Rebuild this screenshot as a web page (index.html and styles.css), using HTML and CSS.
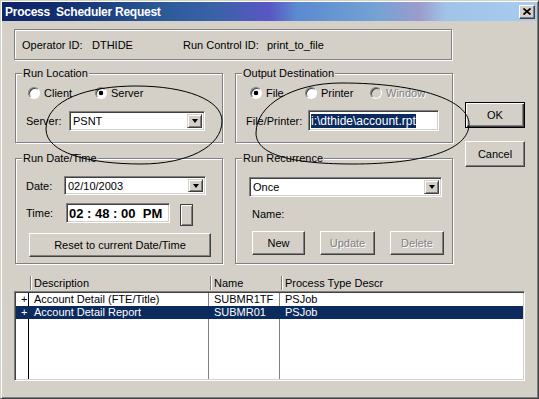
FILE: index.html
```html
<!DOCTYPE html>
<html lang="en">

<head>
  <meta charset="UTF-8">
  <meta name="viewport" content="width=device-width, initial-scale=1.0">
  <title>Process Scheduler Request</title>
  <link rel="stylesheet" href="styles.css">
</head>

<body>
  <div class="window">
    <div class="titlebar">
      <span class="title">Process  Scheduler Request</span>
      <button class="close-btn">
        <svg width="8" height="7" viewBox="0 0 8 7">
          <path d="M0.5 0.5L7.5 6.5M7.5 0.5L0.5 6.5" stroke="#000" stroke-width="1.7" fill="none" />
        </svg>
      </button>
    </div>

    <div class="dialog">
      <div class="info-box etched">
        <span class="info-op">Operator ID:</span>
        <span class="info-user">DTHIDE</span>
        <span class="info-rc">Run Control ID:</span>
        <span>print_to_file</span>
      </div>

      <div class="panels">
        <div class="group etched">
          <div class="group-title">Run Location</div>
          <div class="radio-row loc-radios">
            <label class="radio w-client"><span class="radio-dot"></span>Client</label>
            <label class="radio"><span class="radio-dot checked"></span>Server</label>
          </div>
          <div class="field-row loc-field">
            <span class="lbl w-server">Server:</span>
            <div class="combo combo-server"><span class="combo-text">PSNT</span><span class="drop"></span></div>
          </div>
        </div>

        <div class="group etched">
          <div class="group-title">Output Destination</div>
          <div class="radio-row out-radios">
            <label class="radio w-file"><span class="radio-dot checked"></span>File</label>
            <label class="radio w-printer"><span class="radio-dot"></span>Printer</label>
            <label class="radio disabled"><span class="radio-dot"></span>Window</label>
          </div>
          <div class="field-row out-field">
            <span class="lbl w-fileprinter">File/Printer:</span>
            <div class="textbox"><span class="selected">i:\dthide\account.rpt</span></div>
          </div>
        </div>

        <div class="side-buttons">
          <button class="btn btn-default">OK</button>
          <button class="btn btn-cancel">Cancel</button>
        </div>

        <div class="group etched">
          <div class="group-title">Run Date/Time</div>
          <div class="field-row date-row">
            <span class="lbl w-date">Date:</span>
            <div class="combo combo-date"><span class="combo-text">02/10/2003</span><span class="drop"></span></div>
          </div>
          <div class="field-row time-row">
            <span class="lbl w-time">Time:</span>
            <div class="time-field">02 : 48 : 00  PM</div>
            <div class="spinner"></div>
          </div>
          <button class="btn btn-reset">Reset to current Date/Time</button>
        </div>

        <div class="group etched">
          <div class="group-title">Run Recurrence</div>
          <div class="combo combo-once"><span class="combo-text">Once</span><span class="drop"></span></div>
          <div class="lbl name-lbl">Name:</div>
          <div class="rec-buttons">
            <button class="btn btn-new">New</button>
            <button class="btn btn-update disabled">Update</button>
            <button class="btn btn-delete disabled">Delete</button>
          </div>
        </div>
      </div>

      <div class="list-head">
        <span></span>
        <span class="head-cell">Description</span>
        <span class="head-cell">Name</span>
        <span class="head-cell">Process Type Descr</span>
      </div>
      <div class="list">
        <div class="list-row">
          <span class="expand">+</span><span>Account Detail (FTE/Title)</span><span>SUBMR1TF</span><span>PSJob</span>
        </div>
        <div class="list-row selected-row">
          <span class="expand">+</span><span>Account Detail Report</span><span>SUBMR01</span><span>PSJob</span>
        </div>
      </div>
    </div>

    <!-- hand drawn marks over the dialog -->
    <svg class="marks" width="539" height="399" viewBox="0 0 539 399">
      <path d="M45 128 C45 98, 88 85, 135 85 C185 85, 221 99, 221 120 C221 146, 186 163, 140 163 C88 163, 45 152, 45 128 Z" />
      <path d="M255 132 C255 104, 292 82, 340 82 C420 82, 468 100, 468 123 C468 150, 420 163, 352 163 C298 163, 255 156, 255 132 Z" />
    </svg>
  </div>
</body>

</html>
```

FILE: styles.css
```css
* {
  margin: 0;
  padding: 0;
  box-sizing: border-box;
}

body {
  width: 539px;
  height: 399px;
  overflow: hidden;
  background: #d4d0c8;
  font: 11px "Liberation Sans", Arial, sans-serif;
  color: #000;
}

button {
  font: inherit;
  color: inherit;
}

.window {
  position: relative;
  width: 539px;
  height: 399px;
  padding: 1px;
  border: 1px solid;
  border-color: #d4d0c8 #404040 #404040 #d4d0c8;
  box-shadow: inset 1px 1px #fff, inset -1px -1px #808080;
  background: #d4d0c8;
}

/* title bar */

.titlebar {
  display: flex;
  align-items: center;
  height: 19px;
  padding: 0 2px 0 3px;
  background: linear-gradient(to right, #0c2468 0%, #143070 12%, #2c5a98 30%, #3a62a8 40%, #5a56c4 50%, #5a8ad0 55%, #74a2d4 70%, #9a9ccc 78%, #a0c4e8 83%, #a8ccf0 100%);
}

.title {
  flex: 1;
  color: #fff;
  font: bold 12px "Liberation Sans", Arial, sans-serif;
  letter-spacing: -0.25px;
  white-space: pre;
}

.close-btn {
  display: flex;
  align-items: center;
  justify-content: center;
  width: 16px;
  height: 14px;
  border: 1px solid;
  border-color: #fff #404040 #404040 #fff;
  box-shadow: inset -1px -1px #808080;
  background: #d4d0c8;
}

/* dialog body */

.dialog {
  padding: 8px 0 0 12px;
}

.etched {
  border: 1px solid #808080;
  box-shadow: inset 1px 1px #fff, 1px 1px #fff;
}

.info-box {
  display: flex;
  align-items: center;
  width: 438px;
  height: 31px;
  padding-left: 7px;
}

.info-op {
  width: 70px;
}

.info-user {
  width: 91px;
}

.info-rc {
  width: 84px;
}

.panels {
  display: grid;
  grid-template-columns: 208px 218px 60px;
  grid-template-rows: 70px 106px;
  column-gap: 12px;
  row-gap: 15px;
  margin: 13px 0 0 1px;
}

.side-buttons {
  grid-column: 3;
  grid-row: 1 / span 2;
  display: flex;
  flex-direction: column;
}

.group-title {
  width: fit-content;
  height: 14px;
  margin: -8px 0 0 6px;
  padding: 0 1px;
  line-height: 14px;
  background: #d4d0c8;
}

/* radios */

.radio-row {
  display: flex;
  align-items: center;
  height: 14px;
  margin-top: 6px;
}

.loc-radios {
  margin-left: 12px;
}

.out-radios {
  margin-left: 14px;
}

.radio {
  display: flex;
  align-items: center;
  gap: 4px;
}

.w-client {
  width: 67px;
}

.w-file {
  width: 55px;
}

.w-printer {
  width: 65px;
}

.radio-dot {
  width: 12px;
  height: 12px;
  border-radius: 50%;
  border: 1px solid;
  border-color: #808080 #fff #fff #808080;
  box-shadow: inset 1px 1px #404040;
  background: #fff;
}

.radio-dot.checked {
  background: radial-gradient(circle, #000 0 2px, #fff 2.6px);
}

.radio.disabled {
  color: #808080;
  text-shadow: 1px 1px #fff;
}

.radio.disabled .radio-dot {
  background: #d4d0c8;
}

/* fields */

.field-row {
  display: flex;
  align-items: center;
}

.lbl {
  line-height: 14px;
}

.loc-field {
  margin: 11px 0 0 10px;
}

.out-field {
  margin: 10px 0 0 10px;
}

.w-server {
  width: 43px;
}

.w-fileprinter {
  width: 62px;
}

.w-date {
  width: 38px;
}

.w-time {
  width: 40px;
}

.sunken {
  border: 1px solid;
}

.combo,
.textbox,
.time-field {
  display: flex;
  align-items: center;
  border: 1px solid;
  border-color: #808080 #fff #fff #808080;
  box-shadow: inset 1px 1px #404040, inset -1px -1px #d4d0c8;
  background: #fff;
}

.combo {
  padding: 2px;
}

.combo-text {
  flex: 1;
  padding-left: 1px;
}

.drop {
  display: flex;
  align-items: center;
  justify-content: center;
  width: 15px;
  height: 100%;
  border: 1px solid;
  border-color: #d4d0c8 #404040 #404040 #d4d0c8;
  box-shadow: inset 1px 1px #fff, inset -1px -1px #808080;
  background: #d4d0c8;
}

.drop::after {
  content: "";
  border-top: 4px solid #000;
  border-left: 3.5px solid transparent;
  border-right: 3.5px solid transparent;
}

.combo-server {
  width: 136px;
  height: 20px;
}

.textbox {
  width: 131px;
  height: 21px;
  padding-left: 2px;
  font-size: 12px;
}

.selected {
  background: #0b2a5e;
  color: #fff;
  line-height: 14px;
}

.date-row {
  margin: 11px 0 0 10px;
}

.combo-date {
  width: 142px;
  height: 19px;
}

.time-row {
  align-items: flex-start;
  height: 22px;
  margin: 8px 0 0 10px;
}

.time-row .lbl {
  line-height: 20px;
}

.time-field {
  width: 104px;
  height: 20px;
  padding-left: 2px;
  font: bold 13px "Liberation Sans", Arial, sans-serif;
  white-space: pre;
}

.spinner {
  width: 13px;
  height: 22px;
  margin: 1px 0 0 10px;
  border: 1px solid #404040;
  box-shadow: inset 1px 1px #fff, inset -1px -1px #808080;
}

/* buttons */

.btn {
  display: flex;
  align-items: center;
  justify-content: center;
  border: 1px solid;
  border-color: #fff #404040 #404040 #fff;
  box-shadow: inset -1px -1px #808080;
  background: #d4d0c8;
}

.btn.disabled {
  color: #808080;
  text-shadow: 1px 1px #fff;
}

.btn-default {
  height: 26px;
  margin-top: 29px;
  border-color: #000;
  box-shadow: inset 1px 1px #fff, inset -1px -1px #404040, inset -2px -2px #808080;
}

.btn-cancel {
  height: 26px;
  margin-top: 13px;
}

.btn-reset {
  width: 182px;
  height: 24px;
  margin: 8px 0 0 13px;
}

.combo-once {
  width: 193px;
  height: 20px;
  margin: 12px 0 0 13px;
}

.name-lbl {
  margin: 10px 0 0 16px;
}

.rec-buttons {
  display: flex;
  gap: 15px;
  margin: 10px 0 0 16px;
}

.btn-new {
  width: 53px;
  height: 24px;
}

.btn-update {
  width: 55px;
  height: 24px;
}

.btn-delete {
  width: 54px;
  height: 24px;
}

/* process list */

.list-head {
  display: grid;
  grid-template-columns: 14px 180px 71px 1fr;
  align-items: end;
  width: 511px;
  height: 18px;
  margin-top: 9px;
  padding: 0 2px 1px;
}

.head-cell {
  height: 14px;
  padding-left: 3px;
  border-left: 1px solid #808080;
  box-shadow: inset 1px 0 #fff;
  line-height: 14px;
}

.list {
  width: 511px;
  height: 90px;
  border: 1px solid;
  border-color: #808080 #fff #fff #808080;
  box-shadow: inset 1px 1px #404040, inset -1px -1px #d4d0c8;
  background:
    linear-gradient(#000, #000) 13px 0 / 1px 100% no-repeat,
    linear-gradient(#808080, #808080) 193px 0 / 1px 100% no-repeat,
    linear-gradient(#808080, #808080) 264px 0 / 1px 100% no-repeat,
    #fff;
  padding: 1px;
}

.list-row {
  display: grid;
  grid-template-columns: 14px 180px 71px 1fr;
  height: 13px;
  line-height: 13px;
  white-space: nowrap;
}

.list-row span {
  padding-left: 4px;
}

.list-row .expand {
  padding-left: 5px;
}

.selected-row {
  background: #0b2a5e;
  color: #fff;
}

/* annotation marks */

.marks {
  position: absolute;
  left: 0;
  top: 0;
  pointer-events: none;
}

.marks path {
  fill: none;
  stroke: #000;
  stroke-width: 1;
}
```
